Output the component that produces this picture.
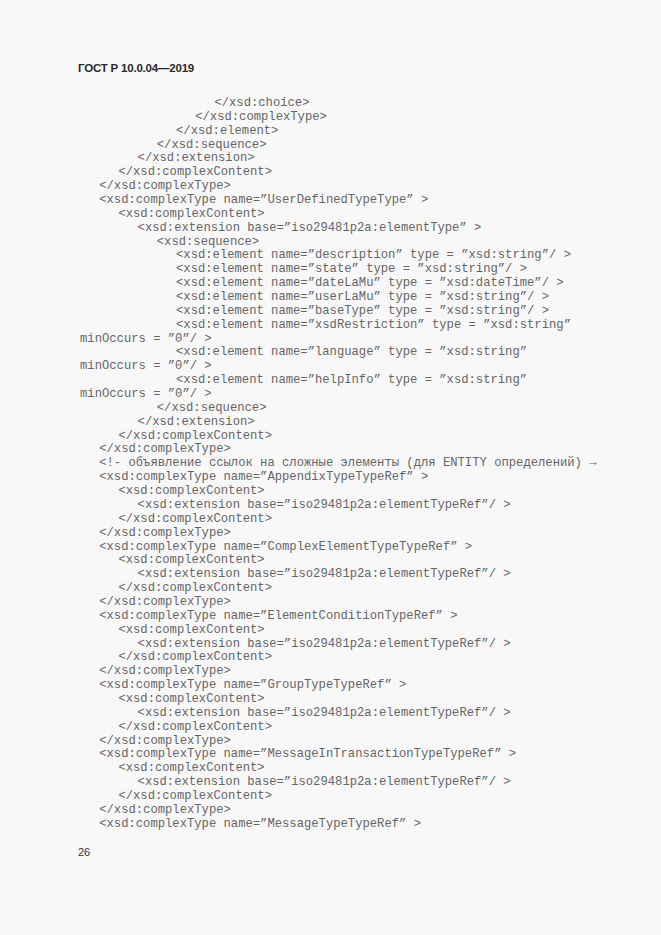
import React from "react";

const L = [
  [7, "</xsd:choice>"],
  [6, "</xsd:complexType>"],
  [5, "</xsd:element>"],
  [4, "</xsd:sequence>"],
  [3, "</xsd:extension>"],
  [2, "</xsd:complexContent>"],
  [1, "</xsd:complexType>"],
  [1, '<xsd:complexType name=\u201dUserDefinedTypeType\u201d >'],
  [2, "<xsd:complexContent>"],
  [3, '<xsd:extension base=\u201diso29481p2a:elementType\u201d >'],
  [4, "<xsd:sequence>"],
  [5, '<xsd:element name=\u201ddescription\u201d type = \u201dxsd:string\u201d/ >'],
  [5, '<xsd:element name=\u201dstate\u201d type = \u201dxsd:string\u201d/ >'],
  [5, '<xsd:element name=\u201ddateLaMu\u201d type = \u201dxsd:dateTime\u201d/ >'],
  [5, '<xsd:element name=\u201duserLaMu\u201d type = \u201dxsd:string\u201d/ >'],
  [5, '<xsd:element name=\u201dbaseType\u201d type = \u201dxsd:string\u201d/ >'],
  [5, '<xsd:element name=\u201dxsdRestriction\u201d type = \u201dxsd:string\u201d'],
  [0, 'minOccurs = \u201d0\u201d/ >'],
  [5, '<xsd:element name=\u201dlanguage\u201d type = \u201dxsd:string\u201d'],
  [0, 'minOccurs = \u201d0\u201d/ >'],
  [5, '<xsd:element name=\u201dhelpInfo\u201d type = \u201dxsd:string\u201d'],
  [0, 'minOccurs = \u201d0\u201d/ >'],
  [4, "</xsd:sequence>"],
  [3, "</xsd:extension>"],
  [2, "</xsd:complexContent>"],
  [1, "</xsd:complexType>"],
  [1, "<!- объявление ссылок на сложные элементы (для ENTITY определений) \u2192"],
  [1, '<xsd:complexType name=\u201dAppendixTypeTypeRef\u201d >'],
  [2, "<xsd:complexContent>"],
  [3, '<xsd:extension base=\u201diso29481p2a:elementTypeRef\u201d/ >'],
  [2, "</xsd:complexContent>"],
  [1, "</xsd:complexType>"],
  [1, '<xsd:complexType name=\u201dComplexElementTypeTypeRef\u201d >'],
  [2, "<xsd:complexContent>"],
  [3, '<xsd:extension base=\u201diso29481p2a:elementTypeRef\u201d/ >'],
  [2, "</xsd:complexContent>"],
  [1, "</xsd:complexType>"],
  [1, '<xsd:complexType name=\u201dElementConditionTypeRef\u201d >'],
  [2, "<xsd:complexContent>"],
  [3, '<xsd:extension base=\u201diso29481p2a:elementTypeRef\u201d/ >'],
  [2, "</xsd:complexContent>"],
  [1, "</xsd:complexType>"],
  [1, '<xsd:complexType name=\u201dGroupTypeTypeRef\u201d >'],
  [2, "<xsd:complexContent>"],
  [3, '<xsd:extension base=\u201diso29481p2a:elementTypeRef\u201d/ >'],
  [2, "</xsd:complexContent>"],
  [1, "</xsd:complexType>"],
  [1, '<xsd:complexType name=\u201dMessageInTransactionTypeTypeRef\u201d >'],
  [2, "<xsd:complexContent>"],
  [3, '<xsd:extension base=\u201diso29481p2a:elementTypeRef\u201d/ >'],
  [2, "</xsd:complexContent>"],
  [1, "</xsd:complexType>"],
  [1, '<xsd:complexType name=\u201dMessageTypeTypeRef\u201d >'],
];

const PAD = [
  "pl-0",
  "pl-[19.2px]",
  "pl-[38.4px]",
  "pl-[57.6px]",
  "pl-[76.8px]",
  "pl-[96px]",
  "pl-[115.2px]",
  "pl-[134.4px]",
];

export default function App() {
  return (
    <div className="w-[661px] h-[935px] bg-[#f8f8f8] overflow-hidden pl-[78px] pt-[61px]">
      <div className="font-[family-name:'Liberation_Sans',Arial,sans-serif] font-bold text-[11.5px] leading-[14px] text-[#2a2a2a] tracking-[-0.2px]">
        ГОСТ Р 10.0.04—2019
      </div>
      <div className="mt-[22px] pl-[2px] font-[family-name:'Liberation_Mono','Courier_New',monospace] text-[12.2px] text-[#666] whitespace-pre">
        {L.map(([lvl, t], i) => (
          <div key={i} className={`h-[13.87px] leading-[13.87px] ${PAD[lvl]}`}>
            {t}
          </div>
        ))}
      </div>
      <div className="mt-[13px] font-[family-name:'Liberation_Sans',Arial,sans-serif] text-[11px] leading-[14px] text-[#333]">
        26
      </div>
    </div>
  );
}
